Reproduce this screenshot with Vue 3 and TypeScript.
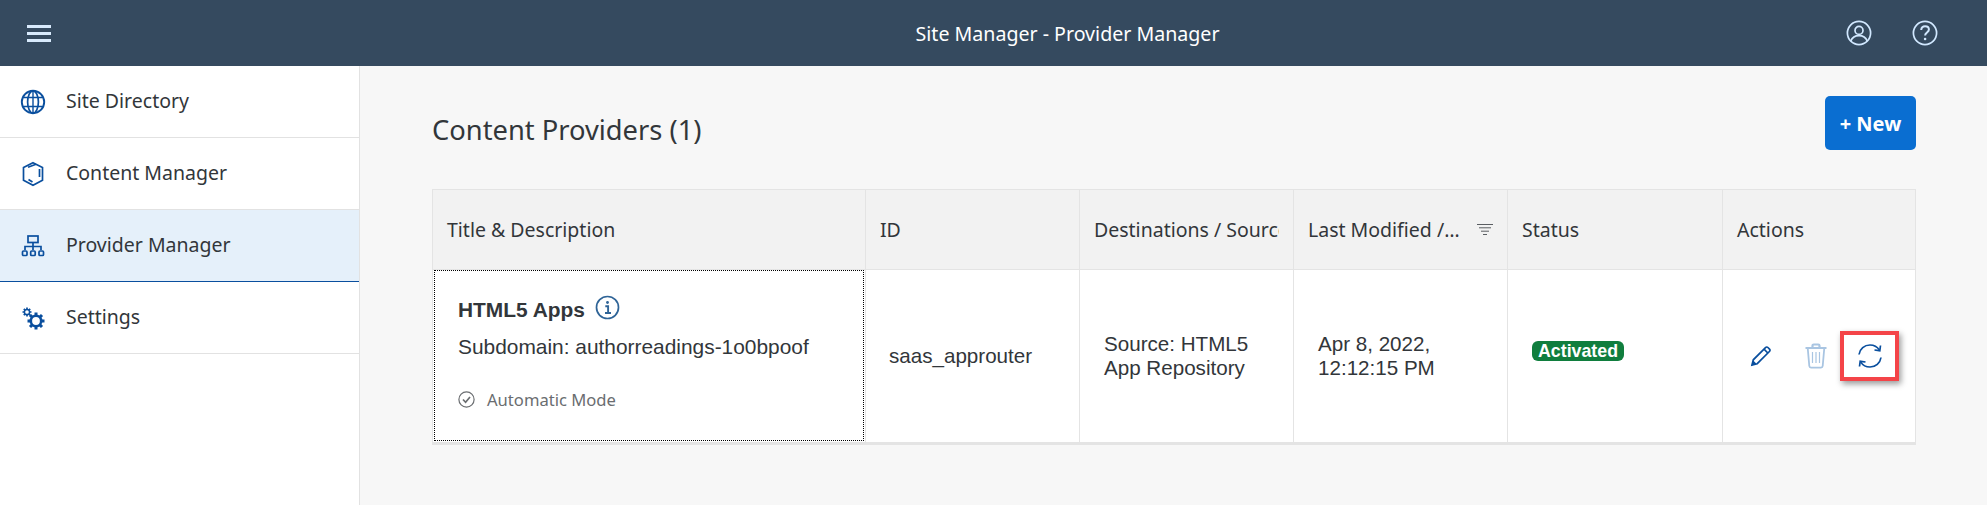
<script setup lang="ts">
const navItems = [
  { key: 'globe', label: 'Site Directory', active: false },
  { key: 'cube', label: 'Content Manager', active: false },
  { key: 'org', label: 'Provider Manager', active: true },
  { key: 'gear', label: 'Settings', active: false }
]
const gearTeeth = [0, 45, 90, 135, 180, 225, 270, 315]
</script>

<template>
  <div class="page">
    <header class="shell">
      <button class="burger" aria-label="Menu"><span></span><span></span><span></span></button>
      <div class="shell-title">Site Manager - Provider Manager</div>
      <div class="shell-actions">
        <svg width="26" height="26" viewBox="0 0 26 26" fill="none" stroke="#d1e8ff" stroke-width="1.7">
          <circle cx="13" cy="13" r="11.6" />
          <circle cx="13" cy="10.4" r="4" />
          <path d="M4.8 21c1.4-3.6 4.4-5.4 8.2-5.4s6.8 1.8 8.2 5.4" />
        </svg>
        <svg width="26" height="26" viewBox="0 0 26 26" fill="none" stroke="#d1e8ff" stroke-width="1.7">
          <circle cx="13" cy="13" r="11.6" />
          <path d="M9.2 10c.2-2.400 1.800-3.700 3.900-3.700 2.200 0 3.800 1.400 3.800 3.300 0 2.900-3.800 3-3.800 5.900" stroke-width="2" />
          <circle cx="13.100" cy="19" r="1.300" fill="#d1e8ff" stroke="none" />
        </svg>
      </div>
    </header>

    <div class="body">
      <nav class="side">
        <div v-for="item in navItems" :key="item.key" class="nav-row" :class="{ active: item.active }">
          <svg class="nav-icon" width="26" height="26" viewBox="0 0 26 26" fill="none" stroke="#0a4f9e" stroke-width="1.700">
            <template v-if="item.key === 'globe'">
              <circle cx="13" cy="13" r="11.200" stroke-width="1.900" />
              <ellipse cx="13" cy="13" rx="5.400" ry="11.200" />
              <path d="M3 8.500h20M3 17.500h20M13 2v22" stroke-width="1.400" />
            </template>
            <template v-else-if="item.key === 'cube'">
              <path d="M13 1.800l9.500 4.700v12.800l-9.500 5-9.500-5V6.500z" />
              <path d="M8 6.300l8-3M19.500 8v8M8.500 18.500l4 2.500" />
            </template>
            <template v-else-if="item.key === 'org'">
              <rect x="8" y="3" width="10" height="6.500" />
              <path d="M13 9.500v4M5 17v-3.500h16V17M13 13.500V17" />
              <rect x="2.500" y="18" width="4.500" height="4.500" rx="1" />
              <rect x="10.700" y="18" width="4.500" height="4.500" rx="1" />
              <rect x="19" y="18" width="4.500" height="4.500" rx="1" />
            </template>
            <template v-else>
              <circle cx="7" cy="7" r="2.600" stroke-width="1.500" />
              <path d="M7 2.500v1.900M7 9.600v1.900M2.500 7h1.900M9.600 7h1.900M3.800 3.800l1.300 1.300M8.900 8.900l1.300 1.300M3.800 10.200l1.300-1.300M8.900 5.100l1.300-1.300" stroke-width="1.700" />
              <circle cx="16" cy="16" r="5.200" stroke-width="2.600" />
              <path v-for="a in gearTeeth" :key="a" d="M16 7.500v3" stroke-width="3" :transform="`rotate(${a} 16 16)`" />
            </template>
          </svg>
          <span class="nav-label">{{ item.label }}</span>
        </div>
      </nav>

      <main class="content">
        <div class="toolbar">
          <h1 class="title">Content Providers (1)</h1>
          <button class="new-btn">+ New</button>
        </div>

        <div class="table">
          <div class="th th-first">Title &amp; Description</div>
          <div class="th th-id">ID</div>
          <div class="th th-clip"><span class="clip">Destinations / Source</span></div>
          <div class="th th-mod"><span>Last Modified /…</span>
            <svg width="16" height="12" viewBox="0 0 16 12" stroke="#5a5e62" stroke-width="1" fill="none">
              <path d="M0 .5h16M2 3.800h12M4 7.200h8M6 10.500h4" />
            </svg>
          </div>
          <div class="th">Status</div>
          <div class="th last">Actions</div>

          <div class="td first">
            <div class="focus">
              <div class="app-line">
                <span class="app-name">HTML5 Apps</span>
                <svg class="info" width="25" height="25" viewBox="0 0 25 25" fill="none" stroke="#2f6497" stroke-width="1.700">
                  <circle cx="12.500" cy="12.500" r="11" />
                  <circle cx="12.500" cy="7.500" r="1.400" fill="#2f6497" stroke="none" />
                  <path d="M10.300 11.200h2.800v6.500M10 18h6" stroke-width="1.900" />
                </svg>
              </div>
              <div class="sub">Subdomain: authorreadings-1o0bpoof</div>
              <div class="mode">
                <svg width="17" height="17" viewBox="0 0 17 17" fill="none" stroke="#6a6d70" stroke-width="1.200">
                  <circle cx="8.500" cy="8.500" r="7.600" />
                  <path d="M5 8.500l2.600 2.800L12 6" stroke-width="1.700" />
                </svg>
                <span>Automatic Mode</span>
              </div>
            </div>
          </div>
          <div class="td id-cell">saas_approuter</div>
          <div class="td two-line src">Source: HTML5<br />App Repository</div>
          <div class="td two-line date">Apr 8, 2022,<br />12:12:15 PM</div>
          <div class="td status-cell"><span class="badge">Activated</span></div>
          <div class="td actions last">
            <svg class="pencil" width="22" height="22" viewBox="0 0 22 22" fill="none" stroke="#0a4f9e" stroke-width="1.700">
              <path d="M2 20l1.300-5.200L15.500 2.600c.8-.8 1.700-.8 2.400-.1l1.600 1.600c.7.700.7 1.600-.1 2.400L7.200 18.700z" />
              <path d="M14 4.200l3.800 3.800" />
              <path d="M1.500 20.500l1.700-5 3.300 3.300z" fill="#0a4f9e" stroke="none" />
            </svg>
            <svg class="trash" width="22" height="26" viewBox="0 0 22 26" fill="none" stroke="#a9c5e2" stroke-width="1.500">
              <path d="M0.500 5h21M7.500 4.500V2.800c0-.9.500-1.300 1.300-1.300h4.400c.8 0 1.300.4 1.300 1.300v1.700" stroke-width="2.200" />
              <path d="M2.800 6l1.500 17c.1 1 .7 1.600 1.700 1.600h10c1 0 1.600-.6 1.700-1.600l1.500-17" stroke-width="1.800" />
              <path d="M7.500 9v11M11 9v11M14.500 9v11" stroke-width="1.200" />
            </svg>
            <span class="sync-box">
              <svg width="26" height="26" viewBox="0 0 26 26" fill="none" stroke="#0a4f9e" stroke-width="1.700">
                <path d="M2 11.500C2.800 6 7.400 2 13 2c3.900 0 7.300 1.900 9.300 4.900" />
                <path d="M24 14.500C23.200 20 18.600 24 13 24c-3.900 0-7.300-1.900-9.300-4.900" />
                <path d="M23.500 2.500l-.7 5.200-5.300-.7M2.500 23.500l.7-5.200 5.300.7" />
              </svg>
            </span>
          </div>
        </div>
      </main>
    </div>
  </div>
</template>

<style>
html, body { margin: 0; }
</style>

<style scoped>
.page {
  width: 1987px;
  height: 505px;
  display: flex;
  flex-direction: column;
  overflow: hidden;
  background: #f7f7f7;
  font-family: "Noto Sans", sans-serif;
  color: #32363a;
}
.shell {
  flex: 0 0 66px;
  display: flex;
  align-items: center;
  background: #354a5f;
}
.burger {
  display: flex;
  flex-direction: column;
  gap: 4px;
  width: 24px;
  margin-left: 27px;
  padding: 0;
  border: 0;
  background: none;
}
.burger span {
  display: block;
  height: 3px;
  background: #d8eafc;
}
.shell-title {
  flex: 1;
  text-align: center;
  padding-left: 238px;
  font-size: 19.6px;
  color: #fff;
}
.shell-actions {
  display: flex;
  gap: 40px;
  margin-right: 49px;
}
.body {
  flex: 1;
  display: flex;
  min-height: 0;
}
.side {
  flex: 0 0 359px;
  background: #fff;
  border-right: 1px solid #e2e2e2;
}
.nav-row {
  height: 71px;
  display: flex;
  align-items: center;
  padding-left: 20px;
  border-bottom: 1px solid #e2e2e2;
}
.nav-row.active {
  background: #e5f0fa;
  border-bottom-color: #0a4f9e;
}
.nav-label {
  margin-left: 20px;
  margin-bottom: 2px;
  font-size: 19.5px;
}
.content {
  flex: 1;
  padding: 30px 71px 0 72px;
  min-width: 0;
}
.toolbar {
  display: flex;
  justify-content: space-between;
  align-items: center;
  height: 54px;
  margin-bottom: 39px;
}
.title {
  margin: 12px 0 0;
  font-size: 27.3px;
  font-weight: 400;
}
.new-btn {
  width: 91px;
  height: 54px;
  border: 0;
  border-radius: 5px;
  background: #0a6ed1;
  color: #fff;
  font: 700 20px "Noto Sans", sans-serif;
}
.table {
  display: grid;
  grid-template-columns: 433px 214px 214px 214px 215px 192px;
  grid-template-rows: 80px 172px;
  width: 1484px;
  box-sizing: border-box;
  border: 1px solid #e4e4e4;
  border-bottom-width: 3px;
}
.th {
  display: flex;
  align-items: center;
  padding-left: 14px;
  background: #f2f2f2;
  border-right: 1px solid #e4e4e4;
  border-bottom: 1px solid #e4e4e4;
  font-size: 19.5px;
  box-sizing: border-box;
  min-width: 0;
  white-space: nowrap;
}
.th-mod {
  justify-content: space-between;
  padding-right: 14px;
}
.clip {
  display: block;
  overflow: hidden;
  white-space: nowrap;
  width: 185px;
}
.td {
  background: #fff;
  border-right: 1px solid #e4e4e4;
  box-sizing: border-box;
  display: flex;
  align-items: center;
  font-family: "Liberation Sans", Arial, sans-serif;
  font-size: 20.6px;
  min-width: 0;
}
.last { border-right: 0; }
.first { padding: 0 1px 1px 1px; }
.focus {
  width: 100%;
  height: 100%;
  box-sizing: border-box;
  border: 1px dotted #000;
  padding: 24px 0 0 23px;
}
.app-line {
  display: flex;
  align-items: center;
  gap: 10px;
  height: 30px;
}
.info { margin-bottom: 5px; }
.app-name { font-weight: 700; font-size: 20.9px; }
.sub { margin-top: 8px; line-height: 28px; font-size: 20.9px; }
.mode {
  display: flex;
  align-items: center;
  gap: 12px;
  margin-top: 27px;
  color: #6a6d70;
  font-family: "Noto Sans", sans-serif;
  font-size: 16.6px;
}
.id-cell { padding-left: 23px; }
.two-line { line-height: 24px; }
.src, .date { padding-left: 24px; }
.status-cell { padding-left: 24px; padding-bottom: 11px; }
.badge {
  background: #107e3e;
  color: #fff;
  font-weight: 700;
  font-size: 17.8px;
  line-height: 20px;
  padding: 0 6px;
  border-radius: 6px;
}
.actions {
  padding-left: 27px;
  padding-bottom: 1px;
}
.pencil { margin-right: 33px; }
.trash { margin-right: 13px; }
.sync-box {
  width: 59px;
  height: 50px;
  box-sizing: border-box;
  border: 4px solid #f44448;
  box-shadow: 2px 3px 6px rgba(0, 0, 0, 0.4);
  display: flex;
  align-items: center;
  justify-content: center;
}
</style>
